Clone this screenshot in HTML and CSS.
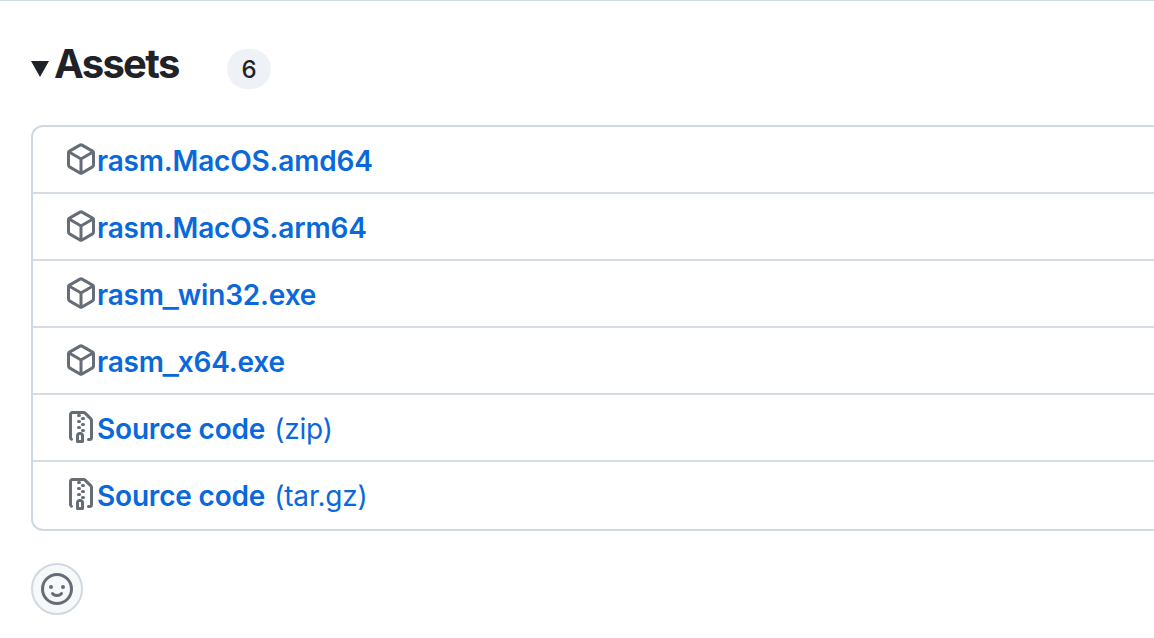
FILE: index.html
```html
<!DOCTYPE html>
<html lang="en">
<head>
    <meta charset="UTF-8">
    <meta name="viewport" content="width=device-width, initial-scale=1.0">
    <title>Assets</title>
    <link rel="stylesheet" href="styles.css">
</head>
<body>

    <svg class="sprite" width="0" height="0">
        <symbol id="package" viewBox="0 0 16 16">
            <path d="m8.878.392 5.25 3.045c.54.314.872.89.872 1.514v6.098a1.75 1.75 0 0 1-.872 1.514l-5.25 3.045a1.75 1.75 0 0 1-1.756 0l-5.25-3.045A1.75 1.75 0 0 1 1 11.049V4.951c0-.624.332-1.201.872-1.514L7.122.392a1.75 1.75 0 0 1 1.756 0ZM7.875 1.69l-4.63 2.685L8 7.133l4.755-2.758-4.63-2.685a.248.248 0 0 0-.25 0ZM2.5 5.677v5.372c0 .09.047.171.125.216l4.625 2.683V8.432Zm6.25 8.271 4.625-2.683a.25.25 0 0 0 .125-.216V5.677L8.75 8.432Z"/>
        </symbol>
        <symbol id="file-zip" viewBox="0 0 16 16">
            <path d="M3.5 1.75v11.5c0 .09.048.173.126.217a.75.75 0 0 1-.752 1.298A1.748 1.748 0 0 1 2 13.25V1.75C2 .784 2.784 0 3.75 0h5.586c.464 0 .909.185 1.237.513l2.914 2.914c.329.328.513.773.513 1.237v8.586A1.75 1.75 0 0 1 12.25 15h-.5a.75.75 0 0 1 0-1.5h.5a.25.25 0 0 0 .25-.25V4.664a.25.25 0 0 0-.073-.177L9.513 1.573a.25.25 0 0 0-.177-.073H7.25a.75.75 0 0 1 0 1.5h-.5a.75.75 0 0 1 0-1.5h-3a.25.25 0 0 0-.25.25Zm3.75 8.75h.5c.966 0 1.75.784 1.75 1.75v3a.75.75 0 0 1-.75.75h-2.5a.75.75 0 0 1-.75-.75v-3c0-.966.784-1.75 1.75-1.75ZM6 5.25a.75.75 0 0 1 .75-.75h.5a.75.75 0 0 1 0 1.5h-.5A.75.75 0 0 1 6 5.25Zm.75 2.25h.5a.75.75 0 0 1 0 1.5h-.5a.75.75 0 0 1 0-1.5ZM8 6.75A.75.75 0 0 1 8.75 6h.5a.75.75 0 0 1 0 1.5h-.5A.75.75 0 0 1 8 6.75ZM8.75 3h.5a.75.75 0 0 1 0 1.5h-.5a.75.75 0 0 1 0-1.5ZM8 9.75A.75.75 0 0 1 8.75 9h.5a.75.75 0 0 1 0 1.5h-.5A.75.75 0 0 1 8 9.75Zm-1 2.5v2.25h1v-2.25a.25.25 0 0 0-.25-.25h-.5a.25.25 0 0 0-.25.25Z"/>
        </symbol>
    </svg>

    <header class="assets-header">
        <svg class="caret" viewBox="0 0 18 16"><path d="M0 0h18L9 16Z"/></svg>
        <h1>Assets</h1>
        <span class="counter">6</span>
    </header>

    <ul class="assets">
        <li><svg class="icon"><use href="#package"/></svg><a class="name" href="#">rasm.MacOS.amd64</a></li>
        <li><svg class="icon"><use href="#package"/></svg><a class="name" href="#">rasm.MacOS.arm64</a></li>
        <li><svg class="icon"><use href="#package"/></svg><a class="name" href="#">rasm<span class="underscore">_</span>win32.exe</a></li>
        <li><svg class="icon"><use href="#package"/></svg><a class="name" href="#">rasm<span class="underscore">_</span>x64.exe</a></li>
        <li><svg class="icon"><use href="#file-zip"/></svg><a class="name" href="#">Source code</a><a class="format" href="#">(zip)</a></li>
        <li><svg class="icon"><use href="#file-zip"/></svg><a class="name" href="#">Source code</a><a class="format" href="#">(tar.gz)</a></li>
    </ul>

    <button class="reaction" aria-label="Add your reaction">
        <svg class="icon" viewBox="0 0 16 16"><path d="M8 0a8 8 0 1 1 0 16A8 8 0 0 1 8 0ZM1.5 8a6.5 6.5 0 1 0 13 0 6.5 6.5 0 0 0-13 0Zm3.82 1.636a.75.75 0 0 1 1.038.175l.007.009c.103.118.22.222.35.31.264.178.683.37 1.285.37.602 0 1.02-.192 1.285-.371.13-.088.247-.192.35-.31l.007-.008a.75.75 0 0 1 1.222.87l-.022-.015c.02.013.021.015.021.015v.001l-.001.002-.002.003-.005.007-.014.019a2.066 2.066 0 0 1-.184.213c-.16.166-.338.316-.53.445-.63.418-1.37.638-2.127.629-.946 0-1.652-.308-2.126-.63a3.331 3.331 0 0 1-.715-.657l-.014-.02-.005-.006-.002-.003v-.002h-.001l.613-.432-.614.43a.75.75 0 0 1 .183-1.044ZM12 7a1 1 0 1 1-2 0 1 1 0 0 1 2 0ZM5 8a1 1 0 1 1 0-2 1 1 0 0 1 0 2Z"/></svg>
    </button>

</body>
</html>
```

FILE: styles.css
```css
* {
    box-sizing: border-box;
}

body {
    margin: 0;
    height: 638px;
    overflow: hidden;
    border-top: 1px solid #d1d9e0;
    background-color: #fff;
    color: #1f2328;
    font-family: Inter, "Liberation Sans", sans-serif;
    font-size: 28px;
}

.sprite {
    display: block;
}

.assets-header {
    display: flex;
    height: 124px;
    padding: 39px 0 0 31px;
}

.caret {
    width: 18px;
    height: 16px;
    margin: 21px 5px 0 0;
    fill: #1f2328;
}

h1 {
    width: 126px;
    margin: 0;
    font-size: 40px;
    font-weight: 650;
    letter-spacing: -1.7px;
    line-height: 48px;
}

.counter {
    width: 44px;
    height: 40px;
    margin: 9px 0 0 47px;
    border-radius: 20px;
    background-color: #eef1f6;
    font-size: 24px;
    font-weight: 500;
    line-height: 42px;
    text-align: center;
}

.assets {
    height: 406px;
    margin: 0 -10px 0 31px;
    padding: 0;
    border: 2px solid #d1d9e0;
    border-radius: 12px;
    list-style: none;
}

.assets li {
    display: flex;
    align-items: flex-start;
    height: 67px;
    padding: 13px 0 0 32px;
    border-bottom: 2px solid #d6dce4;
}

.assets li:last-child {
    border-bottom: 0;
}

.icon {
    width: 32px;
    height: 32px;
    fill: #656d76;
}

.assets .icon {
    margin-top: 3px;
}

.name,
.format {
    color: #0969da;
    line-height: 42px;
    text-decoration: none;
    white-space: nowrap;
}

.name {
    font-weight: 630;
    letter-spacing: -0.18px;
}

.underscore {
    display: inline-block;
    margin: 0 1px 0 0;
    transform: translateY(2px) scaleX(1.25);
}

.format {
    margin-left: 9px;
    letter-spacing: -0.2px;
}

.reaction {
    display: flex;
    align-items: center;
    justify-content: center;
    width: 52px;
    height: 52px;
    margin: 32px 0 0 31px;
    padding: 0;
    border: 2px solid #d1d9e0;
    border-radius: 50%;
    background-color: #f6f8fa;
}
```
